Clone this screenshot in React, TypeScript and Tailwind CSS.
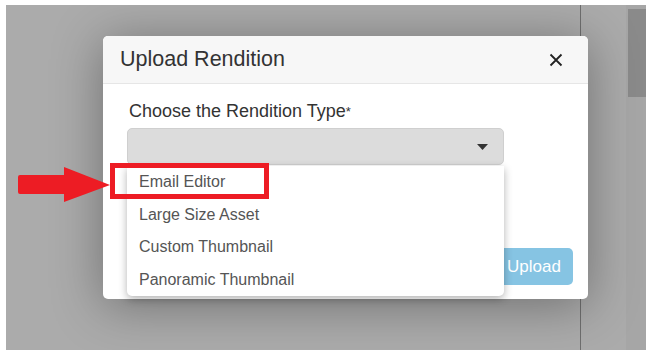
const options = ["Email Editor", "Large Size Asset", "Custom Thumbnail", "Panoramic Thumbnail"];

export default function App() {
  return (
    <div className="h-[362px] w-[658px] bg-white pl-[6px] pt-[5px] font-['Liberation_Sans',Arial,sans-serif]">
      <div className="relative h-[345px] w-[640px] overflow-hidden bg-[#ababab]">
        {/* background page edge + scrollbar */}
        <div className="absolute left-[574px] top-0 h-full w-px bg-[#6e6e6e]" />
        <div className="absolute left-[620px] top-0 h-full w-[20px] bg-[#a6a6a6]">
          <div className="ml-[2px] mt-[4px] h-[88px] w-[18px] bg-[#8a8a8a]" />
        </div>

        {/* modal */}
        <div className="relative ml-[97px] mt-[31px] flex h-[263px] w-[485px] flex-col rounded-[5px] bg-white shadow-[0_6px_50px_rgba(0,0,0,0.35)]">
          <div className="flex h-[48px] items-center justify-between rounded-t-[5px] border-b border-[#e6e6e6] bg-[#f7f7f7] pl-[17px] pr-[25px]">
            <span className="text-[21.5px] text-[#333]">Upload Rendition</span>
            <svg width="14" height="14" viewBox="0 0 14 14" className="text-[#222]">
              <path d="M1.5 1.5 L12.5 12.5 M12.5 1.5 L1.5 12.5" stroke="currentColor" strokeWidth="1.8" />
            </svg>
          </div>

          <div className="px-[24px] pt-[17px]">
            <div className="ml-[2px] h-[21px] text-[18px] leading-[21px] text-[#333]">
              Choose the Rendition Type<span className="align-top text-[13px]">*</span>
            </div>
            <div className="mt-[6px] flex h-[37px] w-[377px] items-center justify-end rounded-[5px] border border-[#cfcfcf] bg-[#dcdcdc] pr-[15px]">
              <svg width="11" height="6" viewBox="0 0 11 6">
                <path d="M0 0 H11 L5.5 6 Z" fill="#333" />
              </svg>
            </div>
          </div>

          <div className="mt-auto flex justify-end pb-[14px] pr-[15px]">
            <button className="h-[37px] w-[78px] rounded-[5px] bg-[#86c4e3] text-[17px] text-white">Upload</button>
          </div>

          {/* open select menu */}
          <div className="absolute left-[24px] top-[130px] w-[377px] rounded-b-[5px] bg-white shadow-[0_3px_8px_rgba(0,0,0,0.3)]">
            {options.map((o) => (
              <div key={o} className="flex h-[32.5px] items-center px-[12px] text-[16px] text-[#555]">
                {o}
              </div>
            ))}
          </div>
        </div>

        {/* annotation */}
        <div className="absolute left-[104px] top-[158px] h-[36px] w-[159px] border-[5px] border-[#ed1c24]" />
        <svg className="absolute left-[12px] top-[156px]" width="94" height="42" viewBox="0 0 94 42">
          <path d="M2 14 H46 V6 L92 24 L46 41 V33 H2 Q0 33 0 31 V16 Q0 14 2 14 Z" fill="#ed1c24" />
        </svg>
      </div>
    </div>
  );
}
